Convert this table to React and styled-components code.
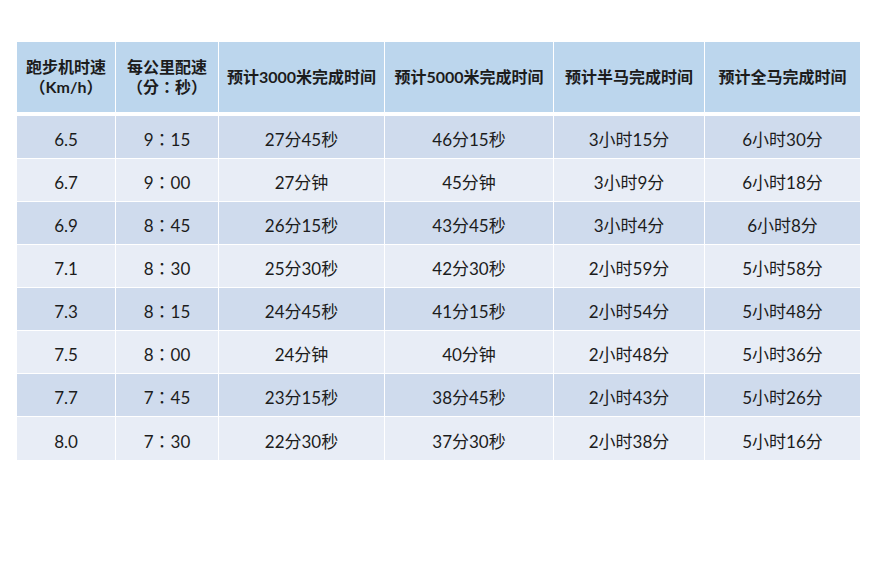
import React from 'react'
import styled, { createGlobalStyle } from 'styled-components'

const GlobalStyle = createGlobalStyle`
  body {
    margin: 0;
    background: #fff;
    font-family: Lato, "Noto Sans CJK SC", sans-serif;
    color: #1c1c1c;
    text-spacing-trim: space-all;
  }
`

const Page = styled.div`
  width: 886px;
  height: 572px;
  padding: 42px 0 0 17px;
  box-sizing: border-box;
`

const Table = styled.div`
  width: 843px;
  display: flex;
  flex-direction: column;
  gap: 1px;
  background: #fff;
`

const Row = styled.div`
  display: grid;
  grid-template-columns: 98px 102px 165px 168px 150px 155px;
  column-gap: 1px;
  height: ${(p) => (p.$head ? '70px' : '42px')};
  margin-bottom: ${(p) => (p.$head ? '3px' : '0')};
  &:last-child {
    height: 43px;
  }
`

const Cell = styled.div`
  display: flex;
  flex-direction: column;
  align-items: center;
  justify-content: center;
  box-sizing: border-box;
  padding-top: ${(p) => (p.$head ? '0' : '6px')};
  text-align: center;
  background: ${(p) => p.$bg};
  font-family: ${(p) => (p.$tc ? 'Lato, "Noto Sans CJK TC", sans-serif' : 'inherit')};
  font-size: ${(p) => (p.$head ? '16px' : '17px')};
  font-weight: ${(p) => (p.$head ? 700 : 400)};
  line-height: 20px;
  white-space: nowrap;
`

// second header line uses centred full-width punctuation
const Line = styled.span`
  font-family: ${(p) => (p.$tc ? 'Lato, "Noto Sans CJK TC", sans-serif' : 'inherit')};
`

const headers = [
  ['跑步机时速', '（Km/h）'],
  ['每公里配速', '（分：秒）'],
  ['预计3000米完成时间'],
  ['预计5000米完成时间'],
  ['预计半马完成时间'],
  ['预计全马完成时间'],
]

const rows = [
  ['6.5', '9：15', '27分45秒', '46分15秒', '3小时15分', '6小时30分'],
  ['6.7', '9：00', '27分钟', '45分钟', '3小时9分', '6小时18分'],
  ['6.9', '8：45', '26分15秒', '43分45秒', '3小时4分', '6小时8分'],
  ['7.1', '8：30', '25分30秒', '42分30秒', '2小时59分', '5小时58分'],
  ['7.3', '8：15', '24分45秒', '41分15秒', '2小时54分', '5小时48分'],
  ['7.5', '8：00', '24分钟', '40分钟', '2小时48分', '5小时36分'],
  ['7.7', '7：45', '23分15秒', '38分45秒', '2小时43分', '5小时26分'],
  ['8.0', '7：30', '22分30秒', '37分30秒', '2小时38分', '5小时16分'],
]

const App = () => {
  return (
    <>
      <GlobalStyle />
      <Page>
        <Table>
          <Row $head>
            {headers.map((h, i) => (
              <Cell key={i} $head $bg="#bcd6ed">
                {h.map((line, li) => <Line key={line} $tc={li === 1}>{line}</Line>)}
              </Cell>
            ))}
          </Row>
          {rows.map((r, ri) => (
            <Row key={ri}>
              {r.map((v, ci) => (
                <Cell key={ci} $tc={ci === 1} $bg={ri % 2 === 0 ? '#cfdbed' : '#e8edf6'}>{v}</Cell>
              ))}
            </Row>
          ))}
        </Table>
      </Page>
    </>
  )
}

export default App
